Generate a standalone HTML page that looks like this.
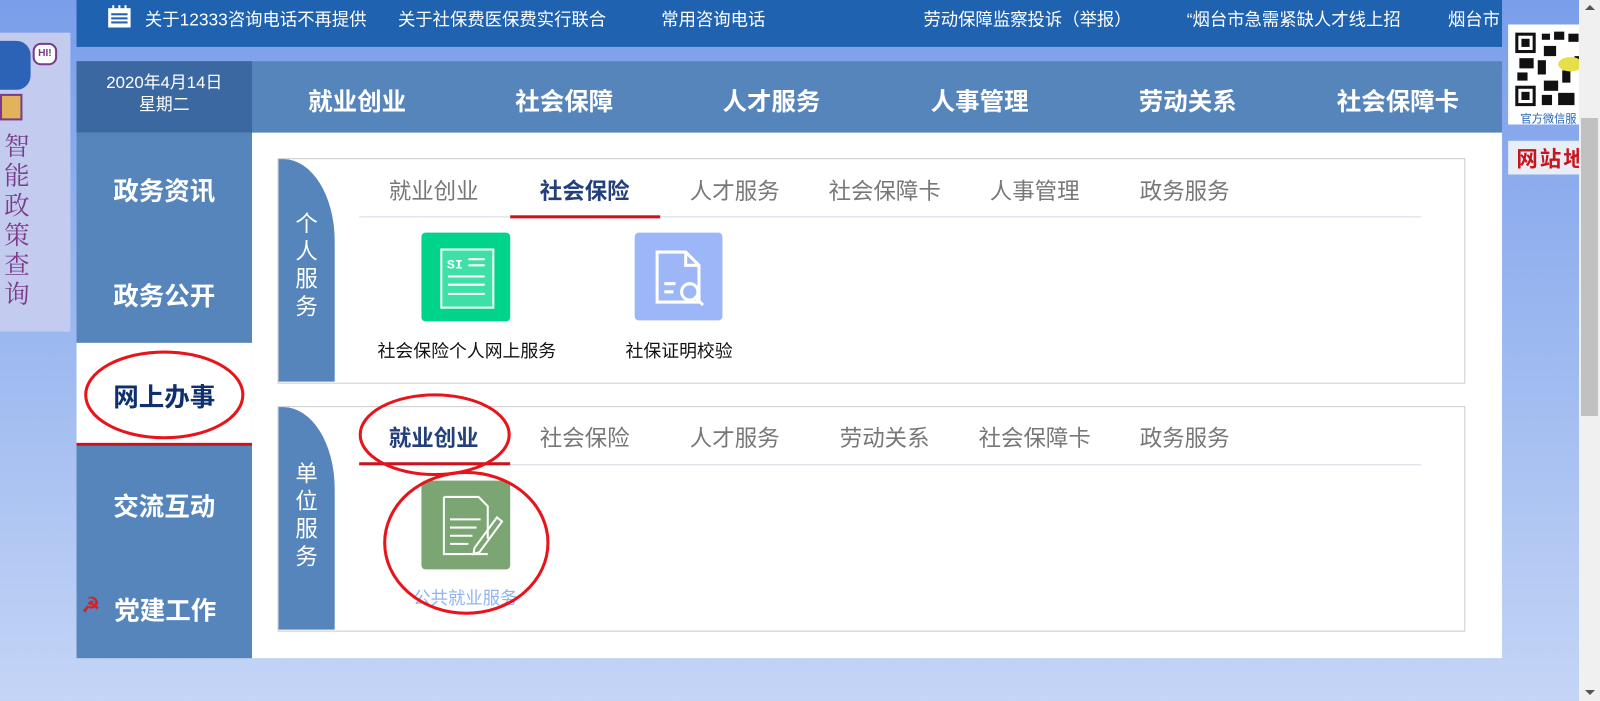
<!DOCTYPE html>
<html><head><meta charset="utf-8"><style>
*{margin:0;padding:0;box-sizing:border-box}
body{width:1600px;height:701px;overflow:hidden;position:relative;font-family:"Liberation Sans","Noto Sans CJK SC",sans-serif;background:linear-gradient(#7a9eea 0%,#9db9f0 50%,#c4d5f6 100%)}
#w{position:absolute;left:0;top:0;width:1568px;height:687px;transform:scale(1.0204);transform-origin:0 0}
.a{position:absolute}
.top{left:75px;top:0;width:1397px;height:46px;background:#1f62b0;color:#fff;font-size:17px}
.top span{position:absolute;top:5px;white-space:nowrap}
.hdr{left:75px;top:60px;width:1397px;height:70px;background:#5685bb}
.date{left:75px;top:60px;width:172px;height:70px;background:#3b68a0;color:#fff;font-size:16.5px;text-align:center;padding-top:10px;line-height:22px}
.nav{color:#fff;font-size:24px;font-weight:bold;top:80px;white-space:nowrap}
.side{left:75px;top:130px;width:172px;height:515px;background:#5585bb}
.si{left:75px;width:172px;text-align:center;color:#fff;font-size:25px;font-weight:bold}
.main{left:247px;top:130px;width:1225px;height:515px;background:#fff}
.panel{left:272px;width:1164px;height:221px;border:1px solid #ccc;background:#fff}
.tabv{left:273px;width:55px;background:#5585bb;border-top-right-radius:50px 80px;color:#fff;font-size:22px;text-align:center;line-height:27px}
.tab{font-size:22px;color:#777;white-space:nowrap}
.line{left:352px;width:1041px;height:1px;background:#d5dbe5}
.lbl{font-size:17.5px;color:#111;white-space:nowrap}
</style></head><body>
<div id="w">
<div class="a top">
<svg class="a" style="left:29px;top:5px" width="26" height="22" viewBox="0 0 26 22"><rect x="2" y="3" width="22" height="19" fill="#fff"/><rect x="6" y="0" width="2" height="5" fill="#fff"/><rect x="12" y="0" width="2" height="5" fill="#fff"/><rect x="18" y="0" width="2" height="5" fill="#fff"/><rect x="5" y="8" width="16" height="2" fill="#1f62b0"/><rect x="5" y="12" width="16" height="2" fill="#1f62b0"/><rect x="5" y="16" width="16" height="2" fill="#1f62b0"/></svg>
<span style="left:67px">关于12333咨询电话不再提供</span>
<span style="left:315px">关于社保费医保费实行联合</span>
<span style="left:573px">常用咨询电话</span>
<span style="left:830px">劳动保障监察投诉（举报）</span>
<span style="left:1088px">“烟台市急需紧缺人才线上招</span>
<span style="left:1344px">烟台市</span>
</div>
<div class="a" style="left:0;top:32px;width:69px;height:293px;background:#c3cbef"></div>
<div class="a" style="left:0;top:40px;width:30px;height:48px;background:#2d63b6;border-radius:0 14px 14px 0"></div>
<div class="a" style="left:32px;top:42px;width:24px;height:22px;border:2px solid #7b3c8c;border-radius:8px;background:#fff;font-size:10px;font-weight:bold;color:#7b3c8c;text-align:center;line-height:18px">HI!</div>
<div class="a" style="left:0;top:92px;width:22px;height:26px;background:#e3b35b;border:2px solid #7b3c8c"></div>
<div class="a" style="left:4px;top:128px;width:30px;font-size:25px;line-height:29px;color:#7b3c8c;font-family:'Noto Serif CJK SC',serif">智能政策查询</div>
<div class="a hdr"></div>
<div class="a date">2020年4月14日<br>星期二</div>
<div class="a nav" style="left:302px">就业创业</div>
<div class="a nav" style="left:505px">社会保障</div>
<div class="a nav" style="left:708px">人才服务</div>
<div class="a nav" style="left:912px">人事管理</div>
<div class="a nav" style="left:1116px">劳动关系</div>
<div class="a nav" style="left:1310px">社会保障卡</div>
<div class="a side"></div>
<div class="a si" style="top:168px">政务资讯</div>
<div class="a si" style="top:271px">政务公开</div>
<div class="a" style="left:75px;top:336px;width:172px;height:101px;background:#fff;border-bottom:3px solid #c8141c"></div>
<div class="a si" style="top:370px;color:#0f2f6e">网上办事</div>
<div class="a si" style="top:477px">交流互动</div>
<div class="a si" style="top:579px;padding-left:2px">党建工作</div>
<div class="a" style="left:80px;top:581px;color:#d2232a;font-size:20px;font-weight:bold">☭</div>
<div class="a main"></div>
<div class="a panel" style="top:155px"></div>
<div class="a tabv" style="top:156px;height:218px;padding-top:50px">个<br>人<br>服<br>务</div>
<div class="a tab" style="left:381px;top:170px">就业创业</div>
<div class="a tab" style="left:529px;top:170px;color:#24407c;font-weight:bold">社会保险</div>
<div class="a tab" style="left:676px;top:170px">人才服务</div>
<div class="a tab" style="left:812px;top:170px">社会保障卡</div>
<div class="a tab" style="left:970px;top:170px">人事管理</div>
<div class="a tab" style="left:1117px;top:170px">政务服务</div>
<div class="a line" style="top:212px"></div>
<div class="a" style="left:500px;top:211px;width:147px;height:3px;background:#c8141c"></div>
<div class="a" style="left:413px;top:228px;width:87px;height:87px;background:#00d38a;border-radius:4px"></div>
<svg class="a" style="left:413px;top:228px" width="87" height="87"><rect x="19.5" y="16.5" width="51" height="57" fill="#3ee0a8" stroke="#fff" stroke-width="2"/><text x="25" y="35" fill="#fff" font-size="13" font-weight="bold" font-family="Liberation Mono">SI</text><g stroke="#fff" stroke-width="2"><line x1="46" y1="26" x2="62" y2="26"/><line x1="46" y1="32" x2="62" y2="32"/><line x1="26" y1="43" x2="62" y2="43"/><line x1="26" y1="51" x2="62" y2="51"/><line x1="26" y1="60" x2="62" y2="60"/></g></svg>
<div class="a lbl" style="left:370px;top:331px">社会保险个人网上服务</div>
<div class="a" style="left:622px;top:228px;width:86px;height:86px;background:#9db6f7;border-radius:4px"></div>
<svg class="a" style="left:622px;top:228px" width="86" height="86" fill="none" stroke="#fff" stroke-width="3"><path d="M22 19H50L63 32V68H22Z"/><path d="M50 19V32H63"/><line x1="29" y1="50" x2="40" y2="50"/><line x1="29" y1="58" x2="38" y2="58"/><circle cx="54" cy="58" r="8"/><line x1="60" y1="64" x2="67" y2="71"/></svg>
<div class="a lbl" style="left:613px;top:331px">社保证明校验</div>
<div class="a panel" style="top:398px"></div>
<div class="a tabv" style="top:399px;height:218px;padding-top:52px">单<br>位<br>服<br>务</div>
<div class="a tab" style="left:381px;top:412px;color:#24407c;font-weight:bold">就业创业</div>
<div class="a tab" style="left:529px;top:412px">社会保险</div>
<div class="a tab" style="left:676px;top:412px">人才服务</div>
<div class="a tab" style="left:823px;top:412px">劳动关系</div>
<div class="a tab" style="left:959px;top:412px">社会保障卡</div>
<div class="a tab" style="left:1117px;top:412px">政务服务</div>
<div class="a line" style="top:455px"></div>
<div class="a" style="left:352px;top:453px;width:148px;height:3px;background:#c8141c"></div>
<div class="a" style="left:413px;top:471px;width:87px;height:87px;background:#7ba573;border-radius:4px"></div>
<svg class="a" style="left:413px;top:471px" width="87" height="87" fill="none" stroke="#fff" stroke-width="2"><path d="M22 16H56L65 25V57M65 72H22V16"/><line x1="28" y1="38" x2="58" y2="38"/><line x1="28" y1="46" x2="54" y2="46"/><line x1="28" y1="54" x2="50" y2="54"/><line x1="28" y1="62" x2="46" y2="62"/><path d="M52 66L74 36L79 40L57 70L51 72Z"/></svg>
<div class="a" style="left:405px;top:572px;font-size:17px;color:#8fb4ee">公共就业服务</div>
<svg class="a" style="left:0;top:0" width="1568" height="687" fill="none" stroke="#e8141c" stroke-width="3"><ellipse cx="161" cy="387" rx="77" ry="42"/><ellipse cx="426" cy="426" rx="73" ry="39"/><ellipse cx="457" cy="532" rx="80" ry="69"/></svg>
<div class="a" style="left:1478px;top:24px;width:101px;height:98px;background:#fff"></div>
<svg class="a" style="left:1483px;top:29px" width="96" height="76"><rect x="0" y="0" width="96" height="76" fill="#fff"/><g fill="#111"><rect x="2" y="3" width="20" height="20"/><rect x="2" y="55" width="20" height="20"/><rect x="28" y="4" width="8" height="6"/><rect x="40" y="2" width="10" height="8"/><rect x="30" y="16" width="12" height="10"/><rect x="6" y="28" width="14" height="10"/><rect x="24" y="30" width="8" height="14"/><rect x="4" y="42" width="10" height="8"/><rect x="30" y="50" width="14" height="10"/><rect x="28" y="64" width="10" height="10"/><rect x="48" y="40" width="8" height="12"/><rect x="44" y="62" width="16" height="12"/><rect x="60" y="26" width="6" height="8"/><rect x="54" y="4" width="10" height="8"/></g><g fill="#fff"><rect x="5" y="6" width="14" height="14"/><rect x="5" y="58" width="14" height="14"/></g><g fill="#111"><rect x="8" y="9" width="8" height="8"/><rect x="8" y="61" width="8" height="8"/></g><ellipse cx="56" cy="34" rx="12" ry="7" fill="#e5e04a"/></svg>
<div class="a" style="left:1490px;top:108px;font-size:11px;color:#1f62b0">官方微信服</div>
<div class="a" style="left:1478px;top:138px;width:101px;height:33px;background:#e8eef5;color:#c8141c;font-size:21px;font-weight:bold;padding:2px 0 0 8px;letter-spacing:2px;white-space:nowrap;overflow:hidden">网站地图</div>
</div>
<div class="a" style="left:1579px;top:0;width:21px;height:701px;background:#f0f0f0"></div>
<div class="a" style="left:1581px;top:118px;width:17px;height:298px;background:#c1c1c1"></div>
<div class="a" style="left:1585px;top:5px;width:0;height:0;border-left:5px solid transparent;border-right:5px solid transparent;border-bottom:5px solid #555"></div>
<div class="a" style="left:1585px;top:690px;width:0;height:0;border-left:5px solid transparent;border-right:5px solid transparent;border-top:5px solid #555"></div>
</body></html>
